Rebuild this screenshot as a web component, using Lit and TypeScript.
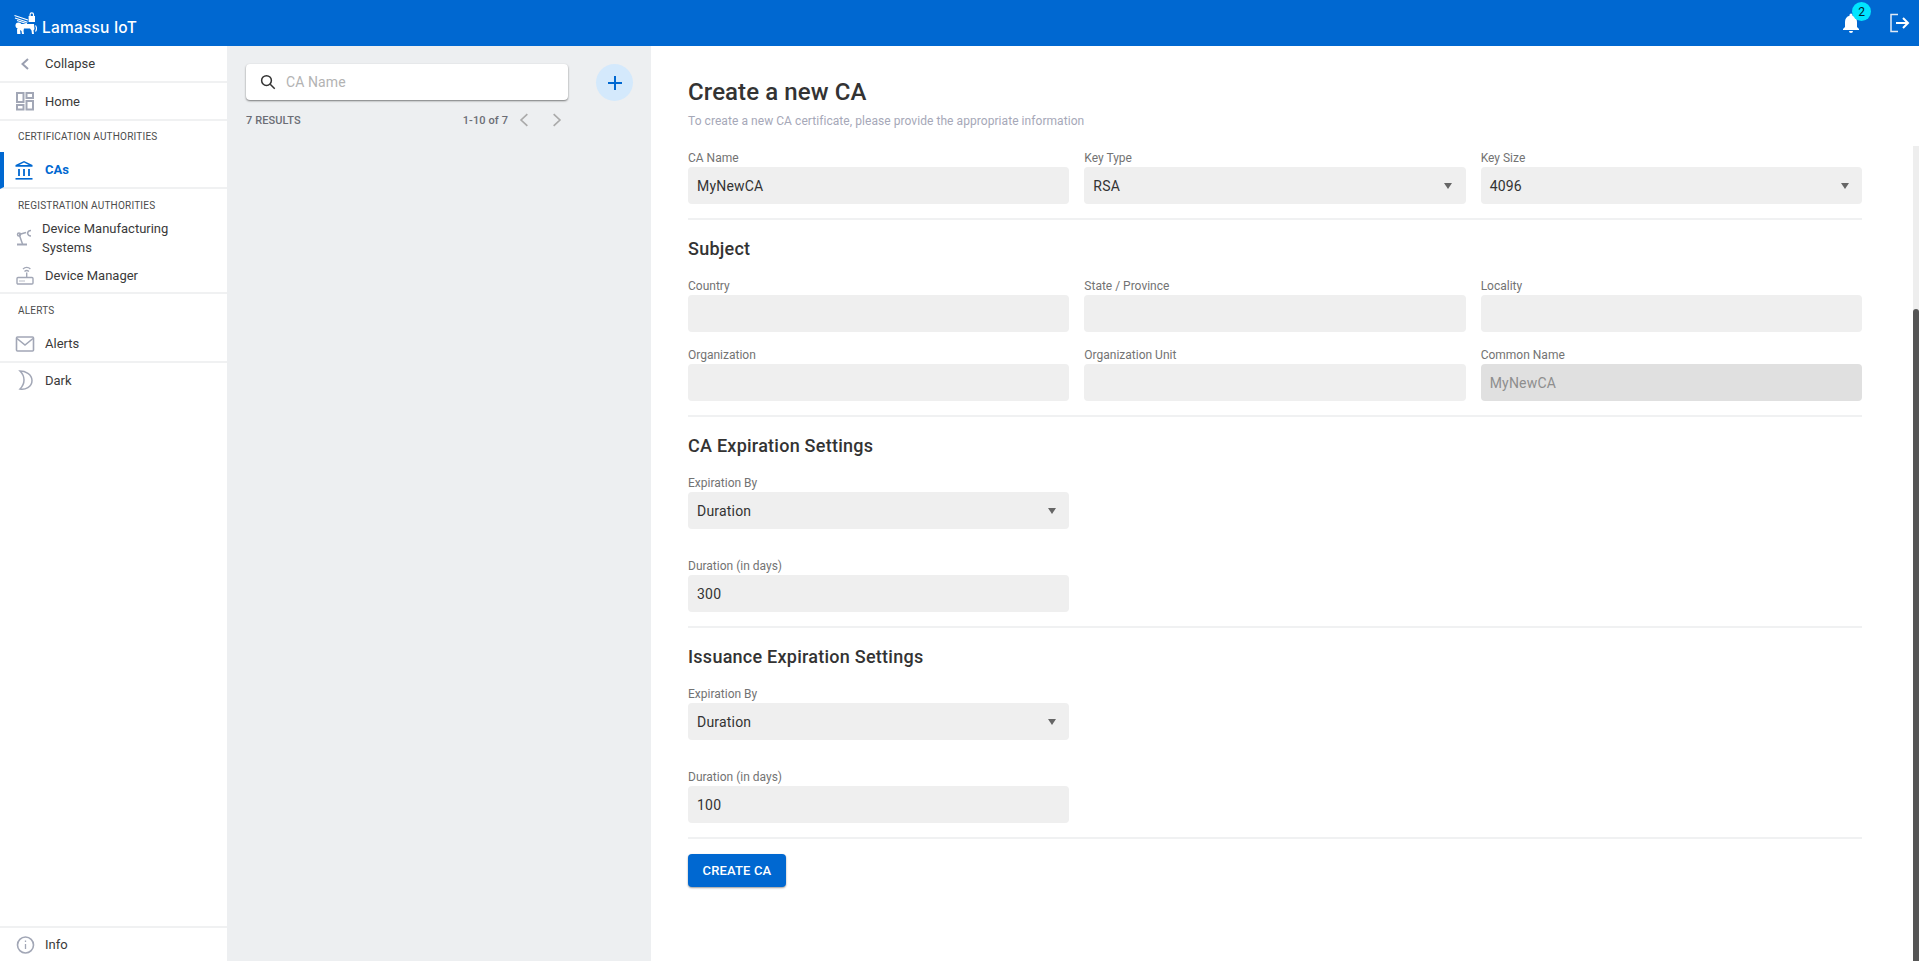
import { LitElement, html, css, svg } from 'lit';
import { customElement } from 'lit/decorators.js';

const logo = svg`
  <g fill="none" stroke="#fff" stroke-width="1.200">
    <path d="M0.500 3.500L14 8M1 6l12.500 4.300M3 8.500l10 3.300" />
    <path d="M21.500 13.500c1.300 2 1 4.500 0 6" />
  </g>
  <g fill="#fff">
    <circle cx="4.500" cy="13.500" r="3" />
    <path d="M4 12h16l.500 5-1 1.500.5 3.500h-2l-.5-3.500-1.500-2h-6l-.5 2.500.5 3h-2l-.5-3-1.500-1 .5 4H3.200l-.2-4.500 1-2z" />
    <path fill-rule="evenodd" d="M15.500 4V2.500a2.300 2.300 0 0 1 4.600 0V4h.9v6h-6.400V4zM16.700 4h2.200V2.500a1.100 1.100 0 0 0-2.200 0z" />
  </g>
`;

const icons = {
  back: svg`<path d="M15 7l-5.500 5 5.500 5" fill="none" stroke="#9a9fb0" stroke-width="2" />`,
  home: svg`<g fill="none" stroke="#a2a7b6" stroke-width="2">
    <rect x="4" y="4" width="6.500" height="9" /><rect x="13.500" y="4" width="6.500" height="5" />
    <rect x="4" y="16" width="6.500" height="4.500" /><rect x="13.500" y="12" width="6.500" height="8.500" />
  </g>`,
  bank: svg`<g fill="#0068d1">
    <path fill-rule="evenodd" d="M12 3L3.500 7v1.700h17V7zM12 4.600L16.800 7H7.200z" />
    <rect x="6.100" y="11" width="1.800" height="7" /><rect x="11.100" y="11" width="1.800" height="7" /><rect x="16.100" y="11" width="1.800" height="7" />
    <rect x="3.500" y="20" width="17" height="1.600" />
  </g>`,
  robot: svg`<g fill="none" stroke="#a2a7b6" stroke-width="1.500">
    <path d="M4 18.500h10" stroke-width="2" />
    <path d="M9.500 18L6.500 9.500M6 8.500l7-2" />
    <circle cx="6" cy="8.500" r="1.500" />
    <path d="M18 4.500a3.500 3.500 0 0 0-3.500 2.500 3.500 3.500 0 0 0 3.500 3" />
  </g>`,
  router: svg`<g fill="none" stroke="#a2a7b6" stroke-width="1.400">
    <rect x="4" y="13.500" width="16" height="6.500" rx="1" />
    <path d="M13.700 13.500V8.500" />
    <path d="M11.500 7.500a3.200 3.200 0 0 1 4.400 0M10 5a5.500 5.500 0 0 1 7.400 0" />
    <path d="M6.500 17h5" stroke-dasharray="1 1" />
  </g>`,
  mail: svg`<g fill="none" stroke="#a2a7b6" stroke-width="1.600">
    <rect x="3.500" y="5" width="17" height="14" rx="1" /><path d="M4 6.500l8 6.500 8-6.500" />
  </g>`,
  moon: svg`<path d="M7 3c5 0 12 3 12 9.500S12 22 7 21c3-3 4-6 4-9s-1-6-4-9z" fill="none" stroke="#a2a7b6" stroke-width="1.500" />`,
  info: svg`<g fill="none" stroke="#a2a7b6">
    <circle cx="12.500" cy="12" r="8" stroke-width="1.600" /><path d="M12.500 11v5M12.500 7.500V9" stroke-width="1.300" />
  </g>`,
};

const icon = (p: unknown) => html`<svg width="24" height="24" viewBox="0 0 24 24">${p}</svg>`;

@customElement('app-root')
export class AppRoot extends LitElement {
  static styles = css`
    :host {
      display: block;
      height: 961px;
      overflow: hidden;
      font-family: Roboto, 'Liberation Sans', sans-serif;
      color: #333;
      background: #fff;
    }
    .top {
      height: 46px;
      background: #0068d1;
      display: flex;
      align-items: center;
      justify-content: space-between;
      color: #fff;
    }
    .brand {
      display: flex;
      align-items: flex-start;
      box-sizing: border-box;
      height: 46px;
      padding: 12px 0 0 14px;
      gap: 5px;
      font-family: Inter, Roboto, sans-serif;
      font-size: 15.500px;
      line-height: 22px;
      font-weight: 500;
      letter-spacing: 0.2px;
    }
    .brand svg {
      display: block;
    }
    .brand span {
      margin-top: 5px;
    }
    .top-right {
      display: flex;
      align-items: center;
      gap: 24px;
      padding-right: 8px;
    }
    .bell {
      position: relative;
      display: flex;
    }
    .badge {
      position: absolute;
      top: -9px;
      left: 13px;
      width: 19px;
      height: 19px;
      border-radius: 50%;
      background: #00e5ff;
      color: #05222c;
      font-size: 12px;
      display: flex;
      align-items: center;
      justify-content: center;
    }
    .body {
      display: flex;
      height: 915px;
    }
    .side {
      width: 227px;
      flex: none;
      display: flex;
      flex-direction: column;
      font-size: 13px;
      color: #3a3a3a;
    }
    .item {
      display: flex;
      align-items: center;
      height: 37px;
      gap: 8px;
      padding-left: 13px;
      box-sizing: border-box;
    }
    .item svg {
      flex: none;
    }
    .line {
      border-bottom: 2px solid #f0f1f2;
    }
    .tall {
      height: 38px;
    }
    .short {
      height: 35px;
    }
    .plain {
      height: 34px;
    }
    .foot {
      height: 35px;
      border-top: 2px solid #f0f1f2;
    }
    .group {
      font-size: 10px;
      letter-spacing: 0.2px;
      color: #4c4c4c;
      padding: 10px 0 0 18px;
      height: 32px;
      box-sizing: border-box;
      line-height: 13px;
    }
    .group.cert {
      height: 31px;
      padding-top: 9px;
    }
    .group.reg {
      height: 28px;
    }
    .active {
      color: #0068d1;
      font-weight: 700;
      border-left: 4px solid #0068d1;
      padding-left: 8px;
      gap: 9px;
    }
    .two {
      height: 42px;
      gap: 5px;
      line-height: 19px;
    }
    .two span {
      width: 150px;
    }
    .grow {
      flex: 1;
    }
    .list {
      width: 424px;
      flex: none;
      background: #edeff1;
      padding: 18px 18px 0 19px;
      box-sizing: border-box;
    }
    .search-row {
      display: flex;
      align-items: flex-start;
      justify-content: space-between;
    }
    .search {
      width: 322px;
      height: 36px;
      background: #fff;
      border-radius: 4px;
      box-shadow: 0 1px 2px rgba(0, 0, 0, 0.5);
      display: flex;
      align-items: center;
      gap: 9px;
      padding-left: 13px;
      box-sizing: border-box;
      font-size: 14px;
      color: #b3b3b3;
      letter-spacing: 0.1px;
    }
    .add {
      width: 37px;
      height: 37px;
      border-radius: 50%;
      background: #d4e9fc;
      display: flex;
      align-items: center;
      justify-content: center;
    }
    .results {
      display: flex;
      align-items: center;
      justify-content: space-between;
      margin-top: 4px;
      height: 30px;
      font-size: 11px;
      font-weight: 500;
      color: #6b6d75;
      letter-spacing: 0.1px;
      padding-right: 66px;
    }
    .pager {
      display: flex;
      align-items: center;
      gap: 6px;
    }
    .pager svg + svg {
      margin-left: 7px;
    }
    .main {
      flex: 1;
      padding: 32px 57px 0 37px;
      position: relative;
      min-width: 0;
    }
    h1 {
      margin: 0;
      font-size: 24px;
      font-weight: 500;
      line-height: 28px;
      letter-spacing: 0.1px;
      color: #333;
    }
    .sub {
      margin-top: 8px;
      font-size: 12px;
      line-height: 14px;
      letter-spacing: 0.06px;
      color: #a6a8b8;
    }
    .grid {
      display: grid;
      grid-template-columns: repeat(3, 1fr);
      column-gap: 15px;
      row-gap: 16px;
    }
    .first {
      margin-top: 23px;
    }
    .field label {
      display: block;
      font-size: 12px;
      line-height: 14px;
      color: #737373;
      margin-bottom: 2px;
    }
    .box {
      height: 37px;
      background: #efefef;
      border-radius: 4px;
      display: flex;
      align-items: center;
      justify-content: space-between;
      padding: 0 13.500px 0 9px;
      font-size: 14px;
      letter-spacing: 0.2px;
      color: #333;
    }
    .box.off {
      background: #e0e0e0;
      color: #8e8e8e;
    }
    .caret {
      width: 0;
      height: 0;
      border: 4.500px solid transparent;
      border-top: 6px solid #666;
      border-bottom: 0;
    }
    hr {
      border: 0;
      border-top: 2px solid #f0f1f2;
      margin: 14px 0 0;
    }
    h2 {
      margin: 18px 0 19px;
      font-size: 18px;
      font-weight: 500;
      line-height: 22px;
      letter-spacing: 0.25px;
      color: #333;
    }
    .stack {
      width: calc((100% - 30px) / 3);
      display: flex;
      flex-direction: column;
      gap: 30px;
    }
    button {
      display: block;
      margin-top: 15px;
      width: 98px;
      height: 33px;
      border: 0;
      padding: 0;
      background: #0068d1;
      color: #fff;
      border-radius: 4px;
      font: 500 13px Roboto, sans-serif;
      letter-spacing: 0.15px;
      box-shadow: 0 1px 2px rgba(0, 0, 0, 0.4);
    }
    .track {
      position: absolute;
      right: 0;
      top: 100px;
      bottom: 0;
      width: 6px;
      background: #eee;
    }
    .thumb {
      position: absolute;
      left: 0;
      right: 0;
      top: 163px;
      bottom: 0;
      background: #555;
      border-radius: 3px 3px 0 0;
    }
  `;

  field(label: string, value = '', select = false, off = false) {
    return html`<div class="field">
      <label>${label}</label>
      <div class="box ${off ? 'off' : ''}">
        <span>${value}</span>${select ? html`<div class="caret"></div>` : ''}
      </div>
    </div>`;
  }

  expiry(title: string, days: string) {
    return html`<hr />
      <h2>${title}</h2>
      <div class="stack">
        ${this.field('Expiration By', 'Duration', true)}
        ${this.field('Duration (in days)', days)}
      </div>`;
  }

  render() {
    return html`
      <div class="top">
        <div class="brand">
          <svg width="23" height="22" viewBox="0 0 23 22">${logo}</svg>
          <span>Lamassu IoT</span>
        </div>
        <div class="top-right">
          <div class="bell">
            <svg width="24" height="24" viewBox="0 0 24 24" fill="#fff">
              <path d="M12 22a2 2 0 0 0 2-2h-4a2 2 0 0 0 2 2zm6-6v-5c0-3.100-1.600-5.600-4.500-6.300V4a1.500 1.500 0 0 0-3 0v.7C7.600 5.400 6 7.900 6 11v5l-2 2v1h16v-1z" />
            </svg>
            <span class="badge">2</span>
          </div>
          <svg width="24" height="24" viewBox="0 0 24 24" fill="none" stroke="#fff" stroke-width="2">
            <path d="M11 3.500H4v17h7" stroke="#dfe9f6" stroke-width="1.500" />
            <path d="M9 12h12M16 7l5 5-5 5" />
          </svg>
        </div>
      </div>
      <div class="body">
        <nav class="side">
          <div class="item line">${icon(icons.back)}<span>Collapse</span></div>
          <div class="item line tall">${icon(icons.home)}<span>Home</span></div>
          <div class="group cert">CERTIFICATION AUTHORITIES</div>
          <div class="item active line">${icon(icons.bank)}<span>CAs</span></div>
          <div class="group reg">REGISTRATION AUTHORITIES</div>
          <div class="item two">${icon(icons.robot)}<span>Device Manufacturing Systems</span></div>
          <div class="item line short">${icon(icons.router)}<span>Device Manager</span></div>
          <div class="group">ALERTS</div>
          <div class="item line">${icon(icons.mail)}<span>Alerts</span></div>
          <div class="item plain">${icon(icons.moon)}<span>Dark</span></div>
          <div class="grow"></div>
          <div class="item foot">${icon(icons.info)}<span>Info</span></div>
        </nav>
        <section class="list">
          <div class="search-row">
            <div class="search">
              <svg width="18" height="18" viewBox="0 0 24 24" fill="none" stroke="#333" stroke-width="2">
                <circle cx="10" cy="10" r="6.500" /><path d="M15 15l6 6" />
              </svg>
              <span>CA Name</span>
            </div>
            <div class="add">
              <svg width="24" height="24" viewBox="0 0 24 24" fill="none" stroke="#0068d1" stroke-width="2"><path d="M12 5v14M5 12h14" /></svg>
            </div>
          </div>
          <div class="results">
            <span>7 RESULTS</span>
            <div class="pager">
              <span>1-10 of 7</span>
              <svg width="20" height="20" viewBox="0 0 24 24" fill="none" stroke="#aaa" stroke-width="2"><path d="M16 5l-7.500 7 7.500 7" /></svg>
              <svg width="20" height="20" viewBox="0 0 24 24" fill="none" stroke="#aaa" stroke-width="2"><path d="M8 5l7.500 7-7.500 7" /></svg>
            </div>
          </div>
        </section>
        <main class="main">
          <h1>Create a new CA</h1>
          <div class="sub">To create a new CA certificate, please provide the appropriate information</div>
          <div class="grid first">
            ${this.field('CA Name', 'MyNewCA')}
            ${this.field('Key Type', 'RSA', true)}
            ${this.field('Key Size', '4096', true)}
          </div>
          <hr />
          <h2>Subject</h2>
          <div class="grid">
            ${this.field('Country')} ${this.field('State / Province')} ${this.field('Locality')}
            ${this.field('Organization')} ${this.field('Organization Unit')}
            ${this.field('Common Name', 'MyNewCA', false, true)}
          </div>
          ${this.expiry('CA Expiration Settings', '300')}
          ${this.expiry('Issuance Expiration Settings', '100')}
          <hr />
          <button>CREATE CA</button>
          <div class="track"><div class="thumb"></div></div>
        </main>
      </div>
    `;
  }
}
